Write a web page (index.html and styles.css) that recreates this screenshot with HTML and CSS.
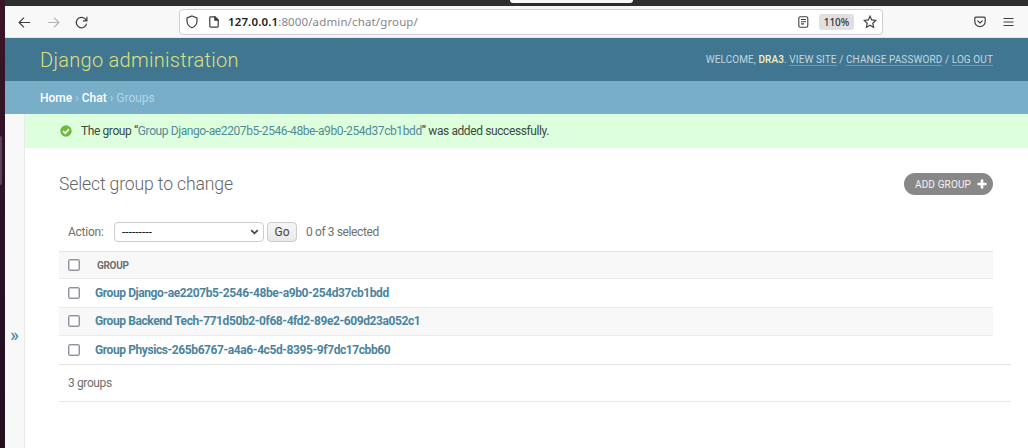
FILE: index.html
```html
<!DOCTYPE html>
<html lang="en">
<head>
<meta charset="utf-8">
<title>Select group to change | Django site admin</title>
<link rel="stylesheet" href="styles.css">
</head>
<body>
<div class="screen">
  <div class="desktop-edge"><span class="edge-handle"></span></div>
  <div class="window">
    <div class="tabstrip"><span class="tab"></span></div>
    <div class="toolbar">
      <div class="nav">
        <svg width="13" height="13" viewBox="0 0 13 13"><path d="M12 6.5H1.2M6 1.6L1.1 6.5L6 11.4"/></svg>
        <svg class="off" width="13" height="13" viewBox="0 0 13 13"><path d="M1 6.5H11.8M7 1.6L11.9 6.5L7 11.4"/></svg>
        <svg class="reload" width="13" height="13" viewBox="0 0 13 13"><path d="M11.6 7.600A5.200 5.200 0 1 1 10.200 2.900L11.6 4.400M11.900 .8V4.800H7.900"/></svg>
      </div>
      <div class="urlbar">
        <svg class="shield" width="12" height="14" viewBox="0 0 12 14"><path d="M6 1L11 3V6C11 9.400 8.900 11.600 6 12.800C3.100 11.600 1 9.400 1 6V3Z"/></svg>
        <svg class="page" width="10" height="12" viewBox="0 0 10 12"><path d="M1.500 .8H6L9.200 4V10.200Q9.200 11.200 8.200 11.200H1.800Q.8 11.200 .8 10.200V1.500Q.8 .8 1.500 .8Z"/><path class="fill" d="M5.800 .8V4.200H9.200Z"/></svg>
        <span class="url"><b>127.0.0.1</b>:8000/admin/chat/group/</span>
        <svg class="reader" width="11" height="12" viewBox="0 0 11 12"><rect x=".8" y=".7" width="9" height="10.600" rx="1.500"/><path d="M3 3.500H8M3 5.700H8M3 7.900H6"/></svg>
        <span class="zoom">110%</span>
        <svg class="star" width="14" height="14" viewBox="0 0 14 14"><path d="M7 1.200L8.700 4.900L12.800 5.400L9.800 8.200L10.600 12.400L7 10.300L3.400 12.400L4.200 8.200L1.200 5.400L5.300 4.900Z"/></svg>
      </div>
      <svg class="pocket" width="12" height="12" viewBox="0 0 12 12"><path d="M1.800 1.200H10.200Q11.200 1.200 11.200 2.200V5.500A5.200 5.200 0 0 1 .8 5.500V2.200Q.8 1.200 1.800 1.200ZM3.400 4.600L6 7L8.600 4.600"/></svg>
      <svg class="menu" width="11" height="10" viewBox="0 0 11 10"><path d="M.5 1.500H10.500M.5 5H10.500M.5 8.500H10.500"/></svg>
    </div>
    <header class="header">
      <h1 class="brand">Django administration</h1>
      <div class="user">WELCOME, <strong>DRA3</strong>. <a>VIEW SITE</a> / <a>CHANGE PASSWORD</a> / <a>LOG OUT</a></div>
    </header>
    <nav class="crumbs"><a>Home</a> › <a>Chat</a> › Groups</nav>
    <div class="body">
      <aside class="side">»</aside>
      <main class="main">
        <div class="message">
          <svg width="12" height="12" viewBox="0 0 12 12"><circle cx="6" cy="6" r="5.700"/><path d="M3 6L5.200 8.200L9 4.200"/></svg>
          <span class="message-text">The group “<a>Group Django-ae2207b5-2546-48be-a9b0-254d37cb1bdd</a>” was added successfully.</span>
        </div>
        <div class="title-row">
          <h2 class="title">Select group to change</h2>
          <a class="add"><span>ADD GROUP</span><svg width="10" height="10" viewBox="0 0 10 10"><path d="M5 .5V9.500M.5 5H9.500"/></svg></a>
        </div>
        <div class="actions">
          <span class="label">Action:</span>
          <span class="select"><span class="dashes">---------</span><svg width="9" height="6" viewBox="0 0 9 6"><path d="M1.200 1.200L4.500 4.400L7.800 1.200"/></svg></span>
          <span class="go">Go</span>
          <span class="count">0 of 3 selected</span>
        </div>
        <div class="table">
          <div class="row head"><span class="box"></span><span class="th">GROUP</span></div>
          <div class="row"><span class="box"></span><a class="name">Group Django-ae2207b5-2546-48be-a9b0-254d37cb1bdd</a></div>
          <div class="row alt"><span class="box"></span><a class="name">Group Backend Tech-771d50b2-0f68-4fd2-89e2-609d23a052c1</a></div>
          <div class="row last"><span class="box"></span><a class="name">Group Physics-265b6767-a4a6-4c5d-8395-9f7dc17cbb60</a></div>
        </div>
        <div class="paginator">3 groups</div>
      </main>
    </div>
  </div>
</div>
</body>
</html>
```
FILE: styles.css
```css
* { box-sizing: border-box; }
body { margin: 0; font-family: Roboto, sans-serif; background: #fff; color: #3c4a3c; }
h1, h2 { margin: 0; font-weight: 300; }
svg { display: block; flex: none; fill: none; stroke: #3f3f44; stroke-width: 1.2; }
span, a, h1, h2 { white-space: nowrap; }
.screen { display: flex; width: 1028px; height: 448px; overflow: hidden; }
.desktop-edge { width: 5px; flex: none; padding-top: 136px; background: linear-gradient(#3b1526, #2b1228 50%, #22101f); }
.edge-handle { display: block; width: 2px; height: 49px; background: #58445a; border-radius: 0 2px 2px 0; }
.window { flex: 1; display: flex; flex-direction: column; min-width: 0; }
.tabstrip { height: 6px; flex: none; background: #302d2f; padding-left: 505px; }
.tab { display: block; width: 123px; height: 3px; background: #fafafa; border-radius: 0 0 4px 4px; }
.toolbar { height: 32px; flex: none; display: flex; align-items: center; background: #f8f8f9; border-bottom: 1px solid #dcebf1; }
.nav { display: flex; gap: 16px; width: 174px; padding: 1px 0 0 13px; }
.off { stroke: #b4b4b7; }
.reload { margin-left: -1px; }
.urlbar { width: 704px; height: 26px; display: flex; align-items: center; background: #fff; border: 1px solid #cfcfd2; border-radius: 4px; padding-left: 6px; }
.page { margin-left: 11px; }
.page .fill { fill: #3f3f44; }
.url { margin-left: 9px; width: 570px; font: 11.5px "Noto Sans", sans-serif; letter-spacing: .13px; color: #85858a; }
.url b { font-weight: 600; color: #222; }
.reader { stroke-width: 1.1; }
.zoom { margin-left: 10px; width: 35px; height: 16px; background: #e0e0e1; border-radius: 3px; font: 500 10px/17px "Noto Sans", sans-serif; letter-spacing: -.1px; color: #333; text-align: center; }
.star { margin-left: 9px; }
.pocket { margin-left: 91px; }
.menu { margin-left: 17px; }
.header { height: 43px; flex: none; display: flex; align-items: center; justify-content: space-between; padding: 0 35px; background: #417690; }
.brand { font-size: 20px; color: #dde080; letter-spacing: .28px; }
.user { font-size: 10px; letter-spacing: .1px; color: #c0d8e2; white-space: nowrap; }
.user strong { font-weight: 500; color: #f3efc8; }
.user a { border-bottom: 1px solid #7199ac; }
.crumbs { height: 33px; flex: none; padding-left: 35px; font-size: 12px; line-height: 34px; color: #b5d4e4; background: #79aec8; }
.crumbs a { color: #fff; font-weight: 500; }
.body { flex: 1; display: flex; min-height: 0; }
.side { width: 20px; flex: none; padding-top: 211px; background: #f8f8f8; border-right: 1px solid #eaeaea; color: #44809d; font-size: 19px; line-height: 20px; text-align: center; }
.main { flex: 1; min-width: 0; }
.message { height: 34px; display: flex; align-items: center; gap: 9px; padding-left: 35px; background: #dfd; font-size: 12px; letter-spacing: -.4px; }
.message svg { fill: #6dbb3a; stroke: none; }
.message svg path { fill: none; stroke: #fff; stroke-width: 1.7; }
.message a { color: #518b99; }
.title-row { display: flex; justify-content: space-between; align-items: center; margin: 25px 35px 0 34px; height: 22px; }
.title { font-size: 17.6px; letter-spacing: -.14px; color: #666; }
.add { display: flex; align-items: center; width: 89px; height: 22px; padding-left: 11px; gap: 6px; border-radius: 11px; background: #888; color: #f4f4f4; font-size: 10px; letter-spacing: .13px; }
.add svg { stroke: #fff; stroke-width: 2.6; }
.actions { display: flex; align-items: center; height: 20px; margin: 27px 0 0 43px; font-size: 12px; color: #707070; }
.label { width: 46px; letter-spacing: -.25px; }
.select { display: flex; align-items: center; justify-content: space-between; width: 150px; height: 20px; padding: 0 4px 0 7px; border: 1px solid #ccc; border-radius: 4px; background: #fff; color: #222; }
.dashes { letter-spacing: 0; }
.select svg { stroke: #444; stroke-width: 1.7; }
.go { width: 30px; height: 20px; margin-left: 3px; line-height: 18px; text-align: center; border: 1px solid #ccc; border-radius: 4px; background: linear-gradient(#f6f6f6, #e9e9e9); color: #444; }
.count { margin-left: 9px; letter-spacing: -.38px; }
.table { margin: 9px 35px 0 34px; }
.row { height: 28.500px; display: flex; align-items: center; padding-left: 9px; border-bottom: 1px solid #eaeaea; }
.head { height: 28px; border-top: 1px solid #e5e5e5; background: #f8f8f8; }
.alt { background: #f8f8f8; }
.last { border-bottom-color: #e4e8e8; }
.box { flex: none; width: 12px; height: 12px; border: 1px solid #9191a0; box-shadow: inset 0 0 0 .5px #9c9ca8; border-radius: 2px; background: #fff; }
.th { margin-left: 17px; font-size: 10px; letter-spacing: -.3px; font-weight: 700; color: #707070; }
.name { margin-left: 15px; font-size: 12px; letter-spacing: -.41px; font-weight: 700; color: #4b84a0; }
.paginator { height: 38px; margin: -1px 17px 0 34px; padding-left: 9px; border-top: 1px solid #e6e6e6; border-bottom: 1px solid #e8e8e8; line-height: 37px; font-size: 12px; letter-spacing: -.38px; color: #707070; }
```
